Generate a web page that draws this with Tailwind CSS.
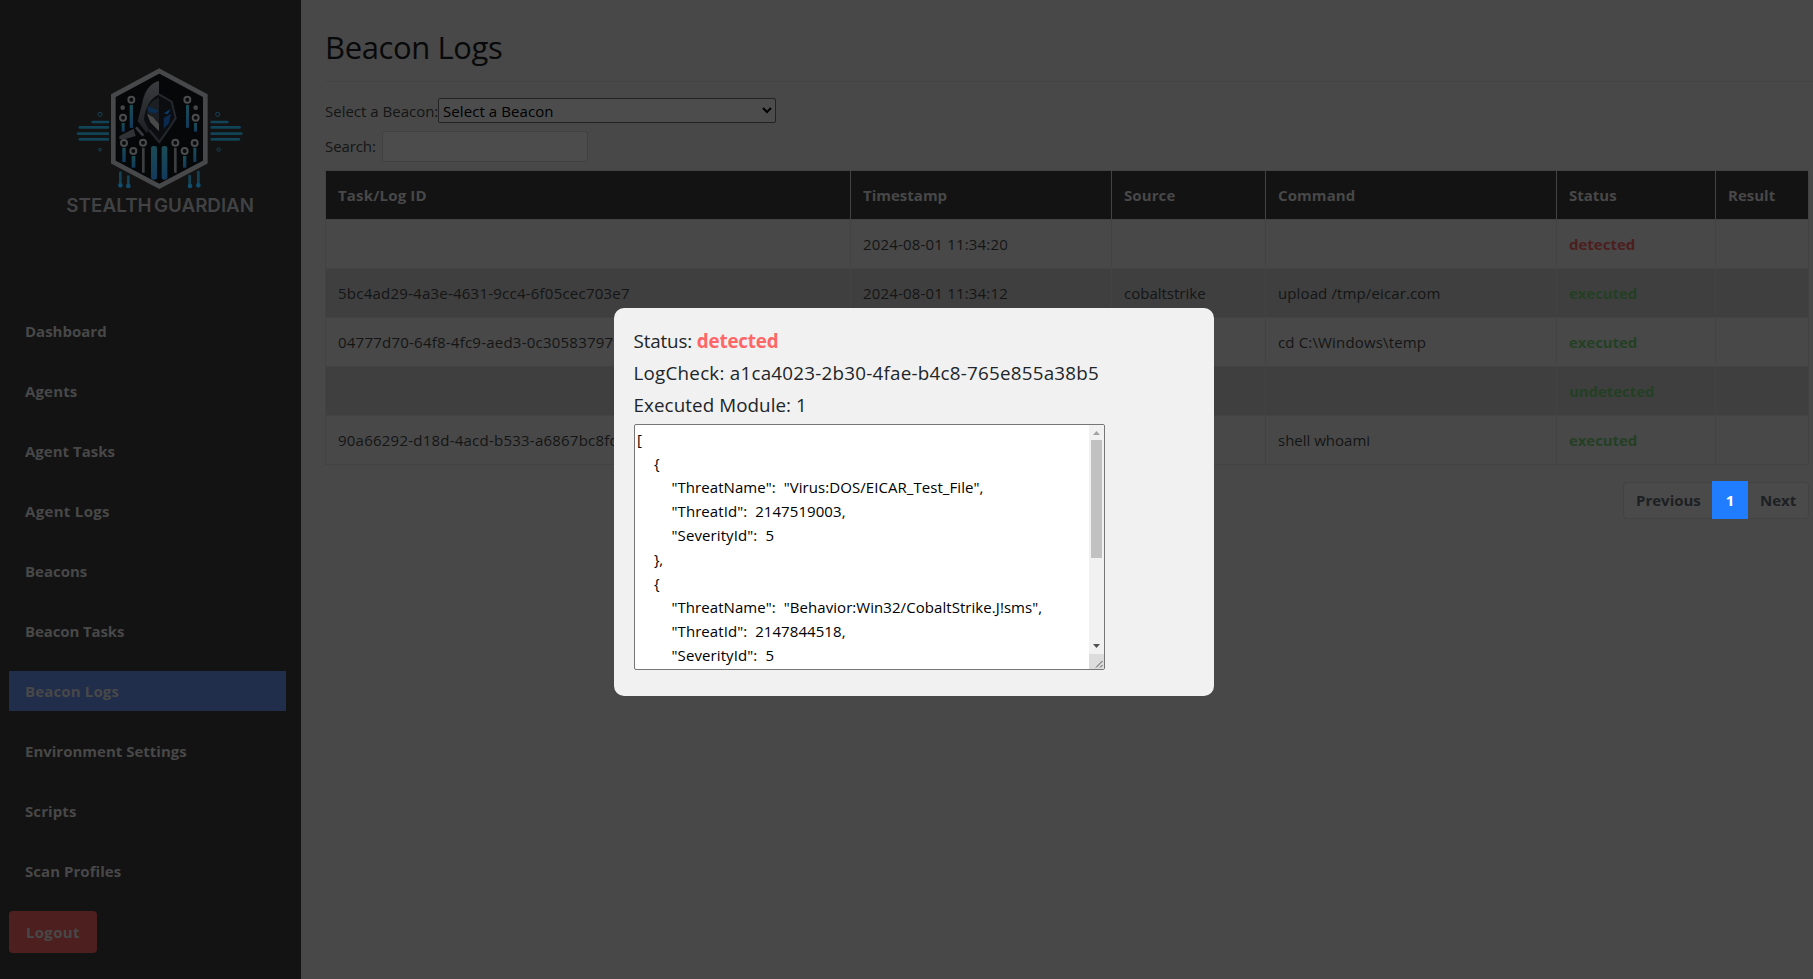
<!DOCTYPE html>
<html lang="en">
<head>
<meta charset="utf-8">
<title>Beacon Logs</title>
<script src="https://cdn.jsdelivr.net/npm/@tailwindcss/browser@4"></script>
</head>
<body class="h-[979px] w-[1813px] overflow-hidden bg-[#484848] font-['Open_Sans','Noto_Sans',sans-serif] text-[15px] leading-6 text-[#141515]">
<div class="flex h-full">
  <aside class="h-full w-[301px] shrink-0 bg-[#131313] pt-[50px] font-bold text-[#484848]">
    <svg class="ml-[50px] block h-[180px] w-[220px]" viewBox="0 0 660 540" fill="none">
      <defs>
        <linearGradient id="beam" x1="0" y1="0" x2="0" y2="1"><stop offset="0" stop-color="#1b4c55"/><stop offset="1" stop-color="#123a5c"/></linearGradient>
        <linearGradient id="hood" x1="0" y1="0" x2="0" y2="1"><stop offset="0" stop-color="#3a3c3e"/><stop offset="1" stop-color="#1c1f24"/></linearGradient>
      </defs>
      <g stroke="#124457" stroke-width="8" stroke-linecap="round">
        <path d="M128 216H174M89 232H174M84 251H174M89 268H174M485 216H532M485 232H569M485 251H574M485 268H567"/>
        <path d="M211 368V400M235 380V403M419 378V403M445 366V400"/>
      </g>
      <g stroke="#15435a" stroke-width="3"><circle cx="150" cy="193" r="6"/><circle cx="503" cy="193" r="6"/><circle cx="150" cy="299" r="4"/><circle cx="506" cy="299" r="5"/></g>
      <g fill="#124d6b"><circle cx="211" cy="406" r="7"/><circle cx="235" cy="408" r="7"/><circle cx="420" cy="408" r="7"/><circle cx="445" cy="406" r="7"/></g>
      <path d="M328 63L466 137V336L328 409L190 336V137Z" fill="#050709" stroke="#46484a" stroke-width="14"/>
      <path d="M327 93C300 98 281 123 275 155L263 213L280 233L325 279L380 208L368 158L327 133Z" fill="#0b0d10"/>
      <path d="M327 93C299 99 283 126 277 160L263 213L290 250L297 239L282 210C285 176 299 146 327 133Z" fill="url(#hood)"/>
      <path d="M327 133L365 155L377 204L360 231L328 276L298 240" stroke="#24282c" stroke-width="6"/>
      <path d="M327 143C309 148 297 160 291 181L294 202L327 244Z" fill="#1b1e22"/>
      <path d="M291 191L309 202L327 222V244L301 217Z" fill="#494949"/>
      <path d="M291 169L326 181L318 190L297 187Z" fill="#0b2d50"/>
      <path d="M341 190L363 177L353 193Z" fill="#0d3964"/>
      <path d="M341 204L363 191L357 220L341 237Z" fill="#0b2a4d"/>
      <path d="M208 258L251 236L257 258L223 268H208Z" fill="#303236"/>
      <path d="M258 232L280 257" stroke="#35383c" stroke-width="8"/>
      <g fill="url(#beam)">
        <rect x="239" y="164" width="10" height="70" rx="3"/><rect x="408" y="164" width="9" height="70" rx="3"/>
        <rect x="215" y="219" width="9" height="26"/><rect x="432" y="219" width="9" height="26"/>
        <rect x="217" y="293" width="10" height="43"/><rect x="245" y="318" width="11" height="35"/>
        <rect x="303" y="288" width="18" height="101" rx="7"/><rect x="335" y="288" width="17" height="101" rx="7"/>
        <rect x="399" y="318" width="10" height="35"/><rect x="430" y="293" width="9" height="43"/>
      </g>
      <path d="M280 293V368M376 293V368" stroke="#3c3e40" stroke-width="8"/>
      <g stroke="#4a4b4c" stroke-width="6" fill="#090b0d">
        <circle cx="244" cy="149" r="9"/><circle cx="412" cy="149" r="9"/><circle cx="219" cy="203" r="9"/><circle cx="437" cy="203" r="9"/>
        <circle cx="222" cy="279" r="9"/><circle cx="250" cy="303" r="9"/><circle cx="279" cy="278" r="9"/>
        <circle cx="376" cy="278" r="9"/><circle cx="404" cy="303" r="9"/><circle cx="434" cy="279" r="9"/>
      </g>
      <circle cx="218" cy="173" r="7" fill="#454647"/><circle cx="437" cy="173" r="7" fill="#454647"/>
      <g fill="#414243" font-family="Inter,sans-serif" font-size="57" font-weight="600">
        <text x="49" y="487" textLength="256" lengthAdjust="spacingAndGlyphs">STEALTH</text>
        <text x="312" y="487" textLength="300" lengthAdjust="spacingAndGlyphs">GUARDIAN</text>
      </g>
    </svg>
    <nav class="mt-[81px] ml-[9px] flex w-[277px] flex-col items-stretch gap-5">
      <a class="flex h-10 items-center pl-4">Dashboard</a>
      <a class="flex h-10 items-center pl-4 tracking-[0.15px]">Agents</a>
      <a class="flex h-10 items-center pl-4">Agent Tasks</a>
      <a class="flex h-10 items-center pl-4 tracking-[0.32px]">Agent Logs</a>
      <a class="flex h-10 items-center pl-4">Beacons</a>
      <a class="flex h-10 items-center pl-4 tracking-[-0.12px]">Beacon Tasks</a>
      <a class="flex h-10 items-center bg-[#202d4b] pl-4 tracking-[0.15px]">Beacon Logs</a>
      <a class="flex h-10 items-center pl-4">Environment Settings</a>
      <a class="flex h-10 items-center pl-4 tracking-[0.1px]">Scripts</a>
      <a class="flex h-10 items-center pl-4 tracking-[0.05px]">Scan Profiles</a>
      <a class="flex h-[42px] w-[88px] items-center rounded bg-[#4d1f1f] pl-[17px] tracking-[0.3px]">Logout</a>
    </nav>
  </aside>
  <main class="flex min-w-0 flex-1 flex-col pl-6">
    <h1 class="mt-[23px] h-12 text-[31px] leading-[48px] tracking-[-0.4px] text-[#08090a]">Beacon Logs</h1>
    <div class="mt-[10px] h-px bg-[#434343]"></div>
    <div class="mt-4 flex h-[25px] items-center">
      <label class="w-[113px] whitespace-nowrap">Select a Beacon:</label>
      <div class="flex h-[25px] w-[338px] items-center justify-between rounded-[2px] border border-[#222] bg-[#4c4c4c] pr-[3px] pl-1 text-black">
        <span class="tracking-[0.08px]">Select a Beacon</span>
        <svg class="h-[7px] w-[10px]" viewBox="0 0 10 7" fill="none" stroke="#000" stroke-width="2"><path d="M1 1l4 4 4-4"/></svg>
      </div>
    </div>
    <div class="mt-2 flex h-[31px] items-center">
      <label class="mb-0.5 w-[57px] tracking-[-0.1px]">Search:</label>
      <div class="h-[31px] w-[206px] rounded-[3px] border border-[#404040] bg-[#4c4c4c]"></div>
    </div>
    <table class="mt-2 w-[1484px] table-fixed border-collapse text-left">
      <colgroup><col class="w-[525px]"><col class="w-[261px]"><col class="w-[154px]"><col class="w-[291px]"><col class="w-[159px]"><col class="w-[93px]"></colgroup>
      <thead>
        <tr class="h-[49px] bg-[#131313] text-[#484848] *:border *:border-[#434343] *:px-3"><th class="tracking-[0.17px]">Task/Log ID</th><th>Timestamp</th><th class="tracking-[0.1px]">Source</th><th class="tracking-[0.1px]">Command</th><th>Status</th><th>Result</th></tr>
      </thead>
      <tbody class="*:h-[49px] *:*:border *:*:border-[#434343] *:*:px-3">
        <tr><td></td><td class="tracking-[0.18px]">2024-08-01 11:34:20</td><td></td><td></td><td class="font-bold text-[#4c1e1e]">detected</td><td></td></tr>
        <tr class="bg-[#3f3f3f]"><td class="tracking-[0.23px]">5bc4ad29-4a3e-4631-9cc4-6f05cec703e7</td><td class="tracking-[0.18px]">2024-08-01 11:34:12</td><td>cobaltstrike</td><td class="tracking-[0.12px]">upload /tmp/eicar.com</td><td class="font-bold tracking-[-0.08px] text-[#244024]">executed</td><td></td></tr>
        <tr><td class="tracking-[0.23px]">04777d70-64f8-4fc9-aed3-0c30583797f1</td><td></td><td></td><td class="tracking-[0.16px]">cd C:\Windows\temp</td><td class="font-bold tracking-[-0.08px] text-[#244024]">executed</td><td></td></tr>
        <tr class="bg-[#3f3f3f]"><td></td><td></td><td></td><td></td><td class="font-bold tracking-[-0.06px] text-[#244024]">undetected</td><td></td></tr>
        <tr><td class="tracking-[0.23px]">90a66292-d18d-4acd-b533-a6867bc8fd21</td><td></td><td></td><td>shell whoami</td><td class="font-bold tracking-[-0.08px] text-[#244024]">executed</td><td></td></tr>
      </tbody>
    </table>
    <div class="mt-4 mr-1 flex h-[38px] items-center self-end font-bold text-[#1d2023]">
      <a class="flex h-[37px] w-[89px] items-center rounded-l border border-r-0 border-[#434343] bg-[#4a4a4a] pl-3">Previous</a>
      <a class="flex h-[38px] w-9 items-center justify-center bg-[#217dff] text-white">1</a>
      <a class="flex h-[37px] w-[61px] items-center rounded-r border border-l-0 border-[#434343] bg-[#4a4a4a] pl-3">Next</a>
    </div>
  </main>
</div>
<div class="fixed inset-0 pt-[308px] pl-[614px]">
  <div class="h-[388px] w-[600px] rounded-[10px] bg-[#f1f1f1] px-[19.5px] pt-[17px] text-[#212529]">
    <p class="h-8 text-[18.8px] leading-8 tracking-[-0.15px]">Status: <b class="text-[#ff6666]">detected</b></p>
    <p class="h-8 text-[18.8px] leading-8 tracking-[0.24px]">LogCheck: a1ca4023-2b30-4fae-b4c8-765e855a38b5</p>
    <p class="h-8 text-[18.8px] leading-8 tracking-[0.08px]">Executed Module: 1</p>
    <div class="mt-[3px] ml-[0.5px] flex h-[246px] w-[471px] overflow-hidden rounded-[2px] border border-[#767676] bg-white text-black">
      <div class="flex-1 pt-[2px] pl-0.5 *:h-6 *:whitespace-pre">
        <div>[</div>
        <div class="pl-[17px]">{</div>
        <div class="pl-[34.5px] tracking-[0.06px]">"ThreatName":  "Virus:DOS/EICAR_Test_File",</div>
        <div class="pl-[34.5px] tracking-[0.07px]">"ThreatId":  2147519003,</div>
        <div class="pl-[34.5px] tracking-[0.1px]">"SeverityId":  5</div>
        <div class="pl-[17px] tracking-[-0.3px]">},</div>
        <div class="pl-[17px]">{</div>
        <div class="pl-[34.5px] tracking-[0.06px]">"ThreatName":  "Behavior:Win32/CobaltStrike.J!sms",</div>
        <div class="pl-[34.5px] tracking-[0.07px]">"ThreatId":  2147844518,</div>
        <div class="pl-[34.5px] tracking-[0.1px]">"SeverityId":  5</div>
      </div>
      <div class="flex w-[15px] flex-col items-center bg-[#f1f1f1]">
        <svg class="mt-1.5 h-1 w-[7px]" viewBox="0 0 7 4" fill="#a3a3a3"><path d="M3.5 0L7 4H0Z"/></svg>
        <div class="mt-[5px] h-[118px] w-[11px] bg-[#c1c1c1]"></div>
        <svg class="mt-[86px] h-1 w-[7px]" viewBox="0 0 7 4" fill="#505050"><path d="M0 0H7L3.5 4Z"/></svg>
        <div class="mt-auto h-[15px] w-[15px] bg-[#dcdcdc]"><svg class="h-[15px] w-[15px]" viewBox="0 0 15 15" fill="none" stroke="#555"><path d="M7 13.5L13.5 7M11 13.5L13.5 11"/></svg></div>
      </div>
    </div>
  </div>
</div>
</body>
</html>
